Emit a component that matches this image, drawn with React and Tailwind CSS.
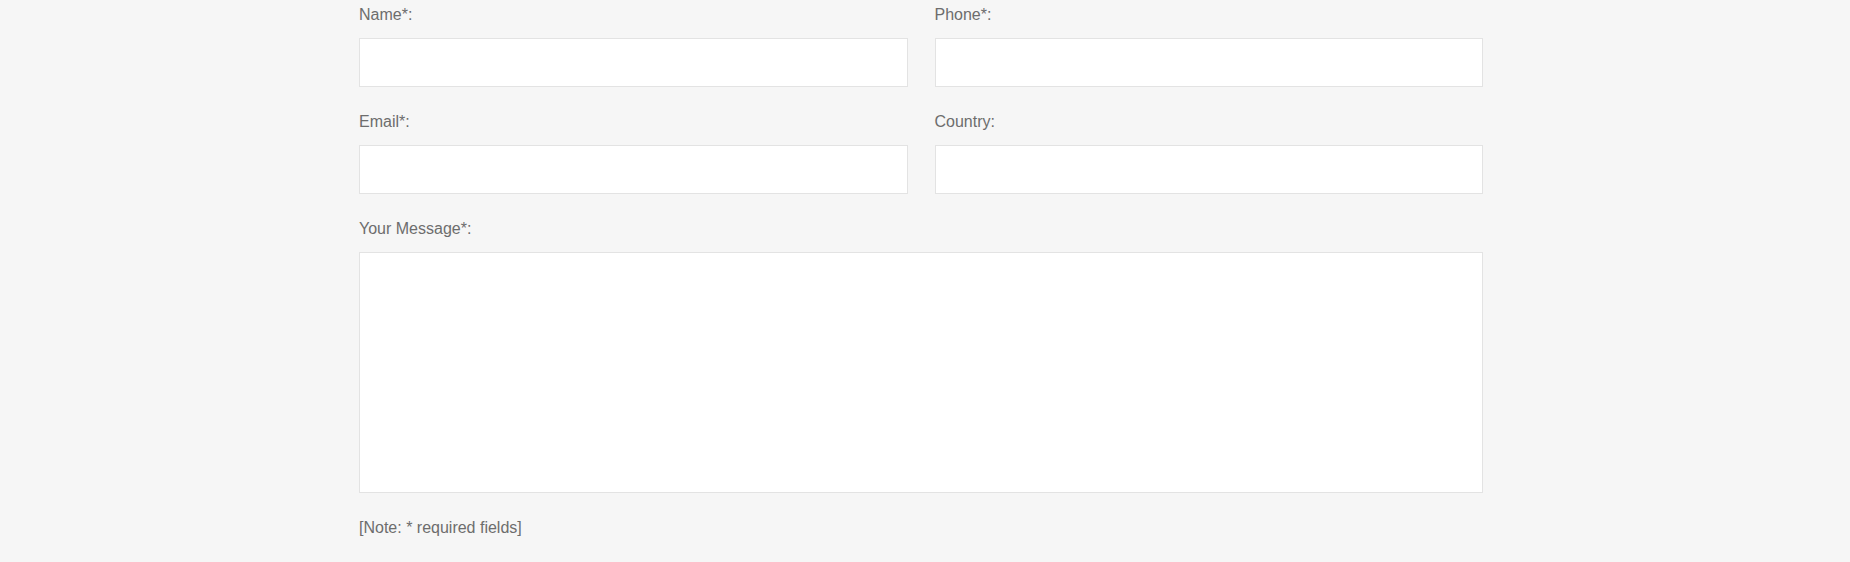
import React from 'react';

const Field = ({ label, className = '' }) => (
    <div className={className}>
        <label className="block text-[16px] leading-[23px] text-[#6d6d6d] mb-[12px]">{label}</label>
        <input
            type="text"
            className="block w-full h-[49px] bg-white border border-[#e3e3e3] outline-none"
        />
    </div>
);

const App = () => {
    return (
        <div className="min-h-[562px] w-full bg-[#f6f6f6] font-['Liberation_Sans',Arial,sans-serif]">
            <form className="ml-[359px] w-[1124px] pt-[3px]">
                {/* Two column inputs */}
                <div className="grid grid-cols-2 gap-x-[27px] gap-y-[23px]">
                    <Field label="Name*:" />
                    <Field label="Phone*:" />
                    <Field label="Email*:" />
                    <Field label="Country:" />
                </div>

                {/* Message */}
                <div className="mt-[23px]">
                    <label className="block text-[16px] leading-[23px] text-[#6d6d6d] mb-[12px]">Your Message*:</label>
                    <textarea className="block w-full h-[241px] bg-white border border-[#e3e3e3] outline-none resize-none" />
                </div>

                <p className="mt-[25px] text-[16px] leading-[20px] text-[#6d6d6d]">[Note: * required fields]</p>
            </form>
        </div>
    );
};

export default App;
